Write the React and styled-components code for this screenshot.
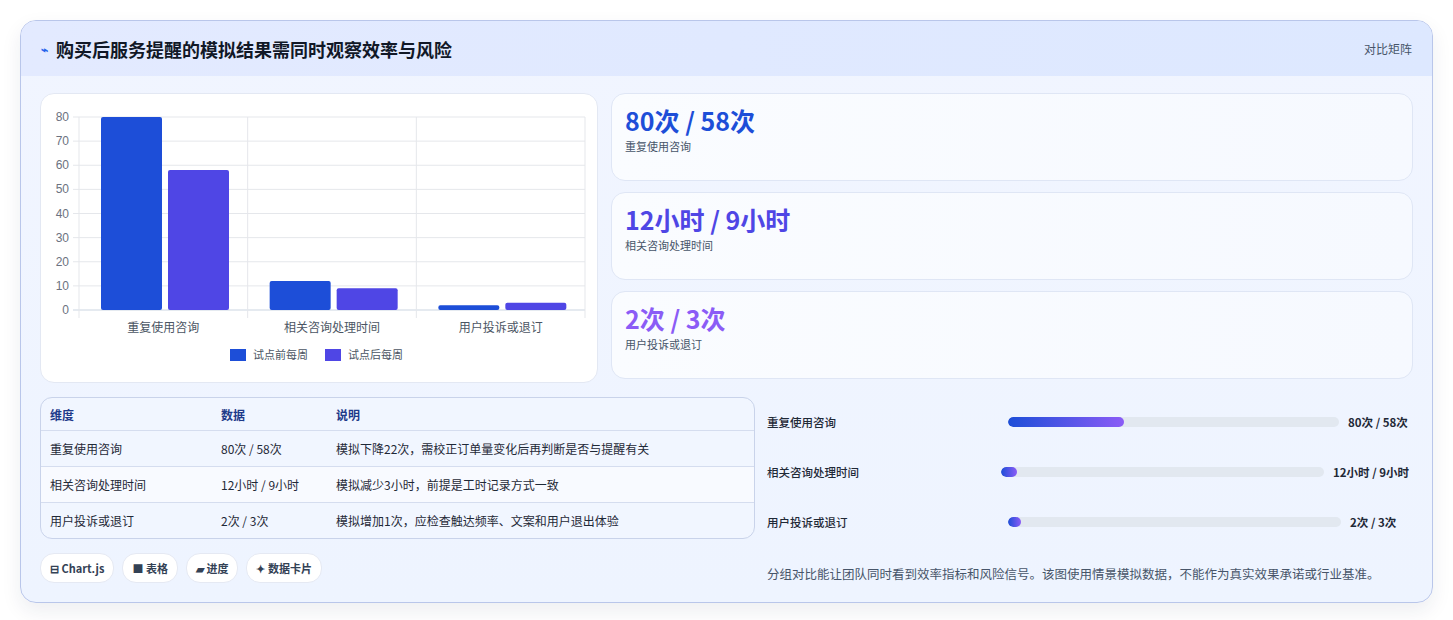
import React from "react";
import styled, { createGlobalStyle } from "styled-components";

const G = createGlobalStyle`
  body{margin:0;background:#fff;font-family:"Noto Sans CJK SC","Noto Sans",sans-serif;}
`;
const Page = styled.div`padding:20px 20px 20px 20px;`;
const Card = styled.div`
  border:1px solid #b9c6ea;border-radius:16px;overflow:hidden;
  background:linear-gradient(180deg,#f1f5ff,#eef4ff);
  box-shadow:0 8px 20px rgba(30,40,80,.08);
`;
const Header = styled.div`
  height:55px;display:flex;align-items:center;justify-content:space-between;
  padding:0 20px;background:linear-gradient(90deg,#e3eaff,#dde8ff);
`;
const Title = styled.h1`margin:0;font-size:18px;font-weight:700;color:#111827;display:flex;align-items:center;gap:8px;`;
const Icon = styled.span`color:#2563eb;font-size:12px;`;
const Tag = styled.span`font-size:12px;color:#475569;`;
const Body = styled.div`padding:17px 19px 0 19px;`;
const Top = styled.div`display:grid;grid-template-columns:558px 1fr;gap:13px;`;
const Panel = styled.div`background:#fff;border:1px solid #e3e8f3;border-radius:14px;`;
const Stats = styled.div`display:flex;flex-direction:column;gap:11px;`;
const Stat = styled.div`
  height:88px;box-sizing:border-box;padding:10px 13px;border:1px solid #dfe6f5;border-radius:14px;
  background:linear-gradient(90deg,#fafcff,#f6f9ff);
`;
const StatVal = styled.div`font-size:25px;font-weight:700;color:${p=>p.c};line-height:32px;`;
const StatLab = styled.div`font-size:11px;color:#475569;margin-top:2px;`;
const Bottom = styled.div`display:grid;grid-template-columns:715px 1fr;gap:12px;margin-top:14px;`;
const Table = styled.div`border:1px solid #c9d3ea;border-radius:12px;overflow:hidden;background:#f1f6ff;`;
const Row = styled.div`
  display:grid;grid-template-columns:171px 115px 1fr;align-items:center;padding:0 9px;
  height:${p=>p.h?32:35}px;font-size:12px;color:${p=>p.h?"#1e3a8a":"#1f2937"};font-weight:${p=>p.h?600:400};
  background:${p=>p.alt?"#f8faff":"transparent"};
  border-top:${p=>p.h?"none":"1px solid #d5ddef"};
`;
const Chips = styled.div`display:flex;gap:8px;margin-top:14px;padding-bottom:19px;`;
const Chip = styled.span`
  font-size:11px;font-weight:600;color:#334155;background:#fff;border:1px solid #e5e9f3;
  border-radius:14px;padding:6px 9px;
`;
const Right = styled.div`padding:0 0 0 0;`;
const Prog = styled.div`display:flex;align-items:center;height:50px;font-size:11.5px;color:#1f2937;font-weight:500;`;
const PLabel = styled.span`width:${p=>p.w}px;flex:none;`;
const Track = styled.div`flex:1;height:10px;border-radius:5px;background:#e2e8f0;overflow:hidden;`;
const Fill = styled.div`height:100%;border-radius:5px;background:linear-gradient(90deg,#1d4ed8,#8b5cf6);`;
const PVal = styled.span`font-weight:700;margin-left:9px;width:${p=>p.w}px;`;
const Note = styled.p`margin:17px 0 0;font-size:12.5px;color:#475569;`;

const cats=["重复使用咨询","相关咨询处理时间","用户投诉或退订"];
const data=[[80,58],[12,9],[2,3]];
function Chart(){
  const x0=38,x1=544,y0=216,y1=23,cw=(x1-x0)/3;
  const ys=v=>y0-(v/80)*(y0-y1);
  return (
    <svg width="556" height="288" style={{display:"block"}}>
      {[0,10,20,30,40,50,60,70,80].map(v=>(
        <g key={v}>
          <line x1={x0-6} x2={x1} y1={ys(v)} y2={ys(v)} stroke={v===0?"#cbd5e1":"#e5e7eb"}/>
          <text x={x0-10} y={ys(v)+4} textAnchor="end" fontSize="12" fill="#6b7280" fontFamily="Liberation Sans">{v}</text>
        </g>
      ))}
      {[0,1,2,3].map(i=><line key={i} x1={x0+i*cw} x2={x0+i*cw} y1={y1} y2={y0+8} stroke="#e5e7eb"/>)}
      {data.map((d,i)=>(
        <g key={i}>
          <rect x={x0+i*cw+22} y={ys(d[0])} width={61} height={y0-ys(d[0])} rx="2" fill="#1d4ed8"/>
          <rect x={x0+i*cw+89} y={ys(d[1])} width={61} height={y0-ys(d[1])} rx="2" fill="#4f46e5"/>
          <text x={x0+i*cw+cw/2} y={238} textAnchor="middle" fontSize="12" fill="#4b5563">{cats[i]}</text>
        </g>
      ))}
      <rect x="189" y="255" width="16" height="12" fill="#1d4ed8"/>
      <text x="212" y="265" fontSize="11" fill="#4b5563">试点前每周</text>
      <rect x="284" y="255" width="16" height="12" fill="#4f46e5"/>
      <text x="307" y="265" fontSize="11" fill="#4b5563">试点后每周</text>
    </svg>
  );
}

export default function App(){
  return (<>
    <G/>
    <Page><Card>
      <Header><Title><Icon>⌁</Icon>购买后服务提醒的模拟结果需同时观察效率与风险</Title><Tag>对比矩阵</Tag></Header>
      <Body>
        <Top>
          <Panel><Chart/></Panel>
          <Stats>
            <Stat><StatVal c="#1d4ed8">80次 / 58次</StatVal><StatLab>重复使用咨询</StatLab></Stat>
            <Stat><StatVal c="#4f46e5">12小时 / 9小时</StatVal><StatLab>相关咨询处理时间</StatLab></Stat>
            <Stat><StatVal c="#8b5cf6">2次 / 3次</StatVal><StatLab>用户投诉或退订</StatLab></Stat>
          </Stats>
        </Top>
        <Bottom>
          <div>
            <Table>
              <Row h><span>维度</span><span>数据</span><span>说明</span></Row>
              <Row><span>重复使用咨询</span><span>80次 / 58次</span><span>模拟下降22次，需校正订单量变化后再判断是否与提醒有关</span></Row>
              <Row alt><span>相关咨询处理时间</span><span>12小时 / 9小时</span><span>模拟减少3小时，前提是工时记录方式一致</span></Row>
              <Row><span>用户投诉或退订</span><span>2次 / 3次</span><span>模拟增加1次，应检查触达频率、文案和用户退出体验</span></Row>
            </Table>
            <Chips><Chip>⊟ Chart.js</Chip><Chip>■ 表格</Chip><Chip>▰ 进度</Chip><Chip>✦ 数据卡片</Chip></Chips>
          </div>
          <Right>
            <Prog><PLabel w={241}>重复使用咨询</PLabel><Track><Fill style={{width:"35%"}}/></Track><PVal w={65}>80次 / 58次</PVal></Prog>
            <Prog><PLabel w={234}>相关咨询处理时间</PLabel><Track><Fill style={{width:"5%"}}/></Track><PVal w={80}>12小时 / 9小时</PVal></Prog>
            <Prog><PLabel w={241}>用户投诉或退订</PLabel><Track><Fill style={{width:"4%"}}/></Track><PVal w={63}>2次 / 3次</PVal></Prog>
            <Note>分组对比能让团队同时看到效率指标和风险信号。该图使用情景模拟数据，不能作为真实效果承诺或行业基准。</Note>
          </Right>
        </Bottom>
      </Body>
    </Card></Page>
  </>);
}
